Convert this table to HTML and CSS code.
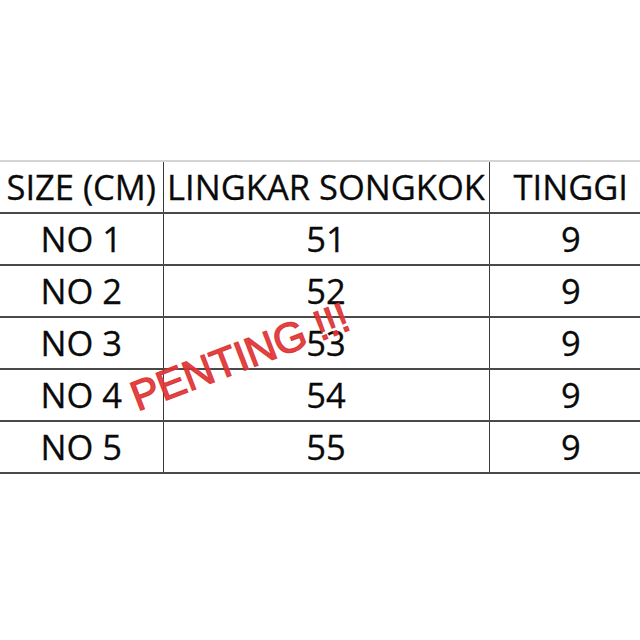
FILE: index.html
```html
<!DOCTYPE html>
<html>
<head>
<meta charset="utf-8">
<link rel="stylesheet" href="styles.css">
</head>
<body>
<div class="page">
  <table class="sizes">
    <colgroup><col class="c1"><col class="c2"><col class="c3"></colgroup>
    <tr class="head"><td>SIZE (CM)</td><td>LINGKAR SONGKOK</td><td>TINGGI</td></tr>
    <tr><td>NO 1</td><td>51</td><td>9</td></tr>
    <tr><td>NO 2</td><td>52</td><td>9</td></tr>
    <tr><td>NO 3</td><td>53</td><td>9</td></tr>
    <tr><td>NO 4</td><td>54</td><td>9</td></tr>
    <tr><td>NO 5</td><td>55</td><td>9</td></tr>
  </table>
  <div class="stamp">PENTING !!!</div>
</div>
</body>
</html>
```
FILE: styles.css
```css
html, body { margin: 0; padding: 0; background: #fff; }
.page { position: relative; width: 640px; height: 640px; overflow: hidden; padding-top: 160px; box-sizing: border-box; }
.sizes { border-collapse: collapse; table-layout: fixed; width: 652px; font-family: "Open Sans", sans-serif; font-size: 34.5px; color: #0a0a0a; -webkit-text-stroke: 0.3px #0a0a0a; }
.c1 { width: 163px; } .c2 { width: 326px; } .c3 { width: 163px; }
.sizes td { height: 50px; padding: 0; text-align: center; border-top: 2px solid #4a4a4a; border-bottom: 2px solid #4a4a4a; border-left: 1.5px solid #3a3a3a; line-height: 50px; white-space: nowrap; }
.sizes td:first-child { border-left: none; }
.sizes tr.head td { border-top-color: #d4d4d4; }
.stamp { position: absolute; left: 140px; top: 376px; transform-origin: 0 100%; transform: rotate(-21deg); font-family: "Liberation Sans", sans-serif; font-weight: normal; font-size: 42px; line-height: 1; color: rgba(222, 50, 50, 0.92); -webkit-text-stroke: 1.3px rgba(222, 50, 50, 0.92); white-space: nowrap; letter-spacing: -0.3px; }
```
